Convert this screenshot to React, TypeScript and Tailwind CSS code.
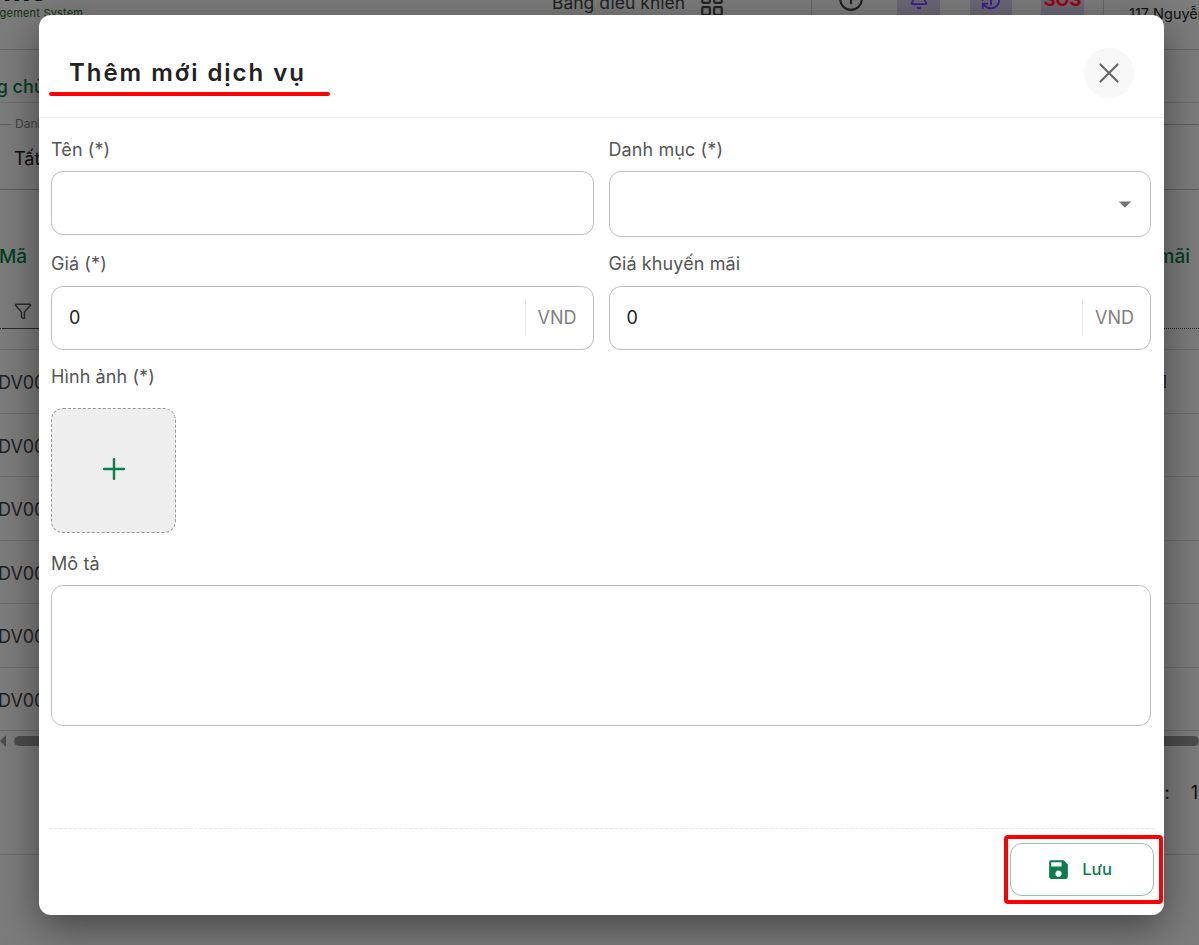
import { Bell, Filter, History, LayoutGrid, Plus, X, CircleAlert } from "lucide-react";
import { MdSave } from "react-icons/md";

const rows = ["DV001", "DV002", "DV003", "DV004", "DV005", "DV006"];

function Label({ children, className = "" }: { children: string; className?: string }) {
  return <div className={`h-6 text-[18px] leading-[26px] tracking-[0.1px] text-[#555] ${className}`}>{children}</div>;
}

function MoneyInput() {
  return (
    <div className="flex h-16 items-center rounded-xl border border-[#bdbdbd] pl-[17px] pr-4">
      <span className="flex-1 text-lg text-[#222]">0</span>
      <span className="h-9 border-l border-[#e8e8e8]" />
      <span className="ml-3 text-lg text-[#808080]">VND</span>
    </div>
  );
}

function Background() {
  return (
    <div className="flex h-[945px] flex-col overflow-hidden bg-[#f8f8f8]">
      <header className="flex h-[50px] shrink-0 flex-col border-b border-[#ccc]">
        <span className="-ml-[35px] -mt-[25px] h-[30px] text-[30px] font-bold leading-[30px] text-[#222]">Soms</span>
        <span className="-ml-[30px] mt-[3px] whitespace-nowrap text-[11px] leading-[10px] tracking-[0.2px] text-[#1f6b24]">Management System</span>
      </header>
      <div className="flex h-[53px] shrink-0 items-start border-b border-[#ddd] pt-[23px]">
        <span className="-ml-[42px] text-lg font-medium text-[#0a7d4f]">Trang chủ</span>
      </div>
      <div className="relative mx-[-10px] mt-[21px] flex h-[66px] shrink-0 items-center rounded-xl border border-[#bbb] pl-[23px] pt-1">
        <span className="absolute left-[20px] top-[-9px] bg-[#f8f8f8] px-1 text-xs text-[#888]">Danh mục</span>
        <span className="text-lg text-[#222]">Tất cả</span>
      </div>
      <div className="flex h-[160px] shrink-0 flex-col justify-between border-b border-[#ddd]">
        <div className="mt-[53px] flex justify-between pr-[9px] text-[19px] font-medium text-[#0a7d4f]">
          <span className="-ml-[1px]">Mã</span>
          <span>mãi</span>
        </div>
        <div className="mb-[20px] flex h-[35px] border-b border-dotted border-[#555]">
          <div className="-mb-px ml-[3px] flex w-[60px] items-center border-b border-[#555] pl-[11px]">
            <Filter className="h-[18px] w-[18px] text-[#555]" />
          </div>
        </div>
      </div>
      {rows.map((r) => (
        <div key={r} className="flex h-[63.5px] shrink-0 items-center justify-between border-b border-[#ddd]">
          <span className="-ml-[2px] pt-1 text-lg text-[#444]">{r}</span>
          {r === "DV001" && <span className="mr-[32px] text-sm text-[#223]">]</span>}
        </div>
      ))}
      <div className="mt-[4px] flex h-[12px] shrink-0 items-center gap-2">
        <div className="h-0 w-0 border-y-[6px] border-r-[6px] border-y-transparent border-r-[#999]" />
        <div className="h-[10px] flex-1 rounded-full bg-[#999]" />
      </div>
      <div className="flex h-[60px] shrink-0 items-end justify-end pr-[1px] text-lg text-[#222]">
        <span className="mr-[21px]">Trang:</span>
        <span>1</span>
      </div>
      <div className="mt-[47px] flex-1 border-t border-[#ddd]" />
    </div>
  );
}

export default function App() {
  return (
    <div className="relative h-[945px] w-full overflow-hidden font-['Inter',sans-serif]">
      <Background />
      <div className="absolute inset-0 bg-black/50" />

      {/* thanh đầu trang phía sau lớp phủ */}
      <div className="absolute left-[552px] top-[-12px] flex items-center gap-[14px] text-[17.5px] text-[#222]">
        <span>Bảng điều khiển</span>
        <LayoutGrid className="mt-1 h-[26px] w-[26px]" />
      </div>
      <div className="absolute left-[811px] top-0 h-[15px] border-l border-[#666]" />
      <div className="absolute left-[1103px] top-0 h-[15px] border-l border-[#666]" />
      <CircleAlert className="absolute left-[838px] top-[-14px] h-[26px] w-[26px] rotate-180 text-[#222]" />
      <div className="absolute left-[897px] top-[-20px] flex h-10 w-[43px] items-center justify-center rounded-md bg-[#6b6875]">
        <Bell className="h-5 w-5 text-[#3b1f8f]" />
      </div>
      <div className="absolute left-[970px] top-[-20px] flex h-10 w-[42px] items-center justify-center rounded-md bg-[#6b6875]">
        <History className="h-[22px] w-[22px] -scale-y-100 text-[#3b1f8f]" />
      </div>
      <div className="absolute left-[1041px] top-[-20px] flex h-10 w-[43px] items-center justify-center rounded-md bg-[#6b6875] text-lg font-bold text-[#a00010]">
        SOS
      </div>
      <span className="absolute left-[1129px] top-[3px] whitespace-nowrap text-[14.5px] text-[#111]">117 Nguyễn</span>

      <div className="absolute left-[39px] top-[15px] flex h-[900px] w-[1125px] flex-col rounded-xl bg-white shadow-[0_12px_40px_rgba(0,0,0,0.45)]">
        <div className="flex h-[103px] shrink-0 items-center justify-between border-b border-[#eaeaea] pl-[30px] pr-[30px] pt-[13px]">
          <h2 className="text-2xl font-semibold tracking-[1.95px] text-[#222]">Thêm mới dịch vụ</h2>
          <button className="flex h-[50px] w-[50px] items-center justify-center rounded-full bg-[#f8f8f8] text-[#666]">
            <X size={34} strokeWidth={1.5} />
          </button>
        </div>

        <div className="flex-1 pl-3 pr-[13px] pt-[19px]">
          <div className="grid grid-cols-2 gap-x-[15px]">
            <div>
              <Label className="mb-[10px]">Tên (*)</Label>
              <div className="h-16 rounded-xl border border-[#bdbdbd]" />
            </div>
            <div>
              <Label className="mb-[10px]">Danh mục (*)</Label>
              <div className="flex h-[66px] items-center justify-end rounded-xl border border-[#bdbdbd] pr-[10px]">
                <svg viewBox="0 0 24 24" className="h-[30px] w-[30px] fill-[#757575]">
                  <path d="M7 10l5 5 5-5z" />
                </svg>
              </div>
            </div>
            <div className="mt-[14px]">
              <Label className="mb-[11px]">Giá (*)</Label>
              <MoneyInput />
            </div>
            <div className="mt-[14px]">
              <Label className="mb-[11px]">Giá khuyến mãi</Label>
              <MoneyInput />
            </div>
          </div>

          <Label className="mb-5 mt-[14px]">Hình ảnh (*)</Label>
          <div className="flex h-[125px] w-[125px] items-center justify-center rounded-xl border border-dashed border-[#999] bg-[#eeeeee] pb-[3px] text-[#0a8050]">
            <Plus size={34} strokeWidth={1.7} />
          </div>

          <Label className="mb-[10px] mt-[18px]">Mô tả</Label>
          <div className="h-[141px] rounded-xl border border-[#bdbdbd]" />
        </div>

        <div className="mx-[10px] flex h-[87px] shrink-0 items-start justify-end border-t border-dashed border-[#e8e8e8] pt-[14px]">
          <button className="flex h-[53px] w-[144px] items-center justify-center gap-[11px] rounded-xl border border-[#8cc4ac] pb-[1px] pr-[6px] text-[16.5px] font-medium text-[#0a7d4f]">
            <MdSave size={25} />
            Lưu
          </button>
        </div>
      </div>

      {/* ghi chú đỏ trên ảnh */}
      <div className="absolute left-[49px] top-[92px] h-[4px] w-[281px] rounded-full bg-[#ff0000]" />
      <div className="absolute left-[1004px] top-[835px] h-[69px] w-[159px] rounded-sm border-4 border-[#ff0000]" />
    </div>
  );
}
